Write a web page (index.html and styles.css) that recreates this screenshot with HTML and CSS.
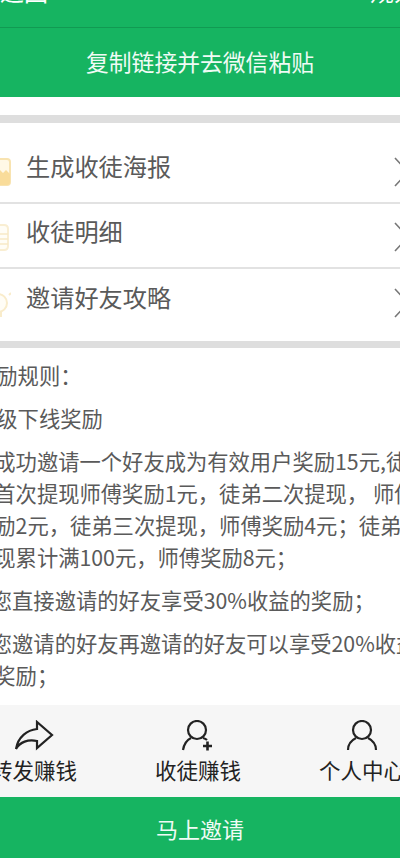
FILE: index.html
```html
<!DOCTYPE html>
<html lang="zh-CN">
<head>
  <meta charset="UTF-8" />
  <title>收徒赚钱</title>
  <link rel="stylesheet" href="styles.css">
</head>
<body>
  <div class="page">
    <div class="top-bar">
      <span>返回</span>
      <span class="top-right">规则</span>
    </div>
    <div class="copy-btn">复制链接并去微信粘贴</div>

    <div class="menu">
      <div class="menu-row row-1">
        <svg class="menu-icon" viewBox="0 0 26 28">
          <rect x="1" y="1" width="24" height="26" rx="3" fill="#fff8e6" stroke="#f8e3b0" stroke-width="2" />
          <path d="M2 26V19L12 9L18 15L21 12L25 16V24Q25 27 22 27H4Z" fill="#f9dc9a" />
        </svg>
        <span class="menu-text">生成收徒海报</span>
        <svg class="chevron" viewBox="0 0 16 30"><path d="M1 1L14 15L1 29" /></svg>
      </div>
      <div class="menu-row row-2">
        <svg class="menu-icon" viewBox="0 0 26 28">
          <path d="M9 2H19Q23 2 23 6V23Q23 27 19 27H6Q2 27 2 23V9Z" fill="#fffdf6" stroke="#f9eed2" stroke-width="2" />
          <path d="M11 11H23M11 16H23M11 21H23" stroke="#f8e9c6" stroke-width="1.5" />
        </svg>
        <span class="menu-text">收徒明细</span>
        <svg class="chevron" viewBox="0 0 16 30"><path d="M1 1L14 15L1 29" /></svg>
      </div>
      <div class="menu-row row-3">
        <svg class="menu-icon" viewBox="0 0 26 28">
          <circle cx="13" cy="14" r="9" fill="#fffdf6" stroke="#f9eccb" stroke-width="2" />
          <path d="M9 23V27H16V23M24 6L26 4" fill="none" stroke="#f9eccb" stroke-width="2" />
        </svg>
        <span class="menu-text">邀请好友攻略</span>
        <svg class="chevron" viewBox="0 0 16 30"><path d="M1 1L14 15L1 29" /></svg>
      </div>
    </div>

    <div class="rules">
      <p class="rule-head">奖励规则：</p>
      <p class="rule-head">一级下线奖励</p>
      <p>您成功邀请一个好友成为有效用户奖励15元,徒<br>弟首次提现师傅奖励1元，徒弟二次提现， 师傅奖<br>奖励2元，徒弟三次提现，师傅奖励4元；徒弟提<br>提现累计满100元，师傅奖励8元；</p>
      <p>1.您直接邀请的好友享受30%收益的奖励；</p>
      <p>2.您邀请的好友再邀请的好友可以享受20%收益<br>的奖励；</p>
    </div>

    <div class="tabs">
      <div class="tab">
        <svg class="tab-icon" viewBox="0 0 40 34">
          <path d="M2 29C4 17 13 10 23 9V2L38 15L23 28V21C14 19 6 22 2 29Z" />
        </svg>
        <span>转发赚钱</span>
      </div>
      <div class="tab">
        <svg class="tab-icon" viewBox="0 0 40 34">
          <circle cx="19" cy="10" r="9" />
          <path d="M5 30C6 24 9 20 13 18M25 18C27 18.500 28 19 29 20" />
          <path class="plus" d="M25 26H34M29.500 21.500V30.500" />
        </svg>
        <span>收徒赚钱</span>
      </div>
      <div class="tab">
        <svg class="tab-icon" viewBox="0 0 40 34">
          <circle cx="20" cy="10" r="9" />
          <path d="M6 30C6 24 10 20 14 18M26 18C30 20 34 24 34 30" />
        </svg>
        <span>个人中心</span>
      </div>
    </div>
    <div class="invite-btn">马上邀请</div>
  </div>
</body>
</html>
```

FILE: styles.css
```css
html, body {
  margin: 0;
  height: 100%;
  overflow: hidden;
  background-color: #fff;
}
.page {
  display: flex;
  flex-direction: column;
  width: 492px;
  height: 858px;
  margin-left: -46px;
  font-family: "Noto Sans CJK SC", "Noto Sans", sans-serif;
  overflow: hidden;
}
.top-bar {
  display: flex;
  justify-content: space-between;
  height: 27px;
  padding: 0 28px 0 46px;
  background-color: #16b461;
  border-bottom: 1px solid #119a52;
  color: #fff;
  font-size: 24px;
  line-height: 24px;
  overflow: hidden;
}
.top-bar span {
  margin-top: -21px;
}
.copy-btn {
  height: 69px;
  line-height: 67px;
  text-align: center;
  background-color: #16b461;
  color: #f0fbf5;
  font-size: 22.800px;
}
.menu {
  margin-top: 18px;
  border-top: 8px solid #dedede;
  border-bottom: 7px solid #dedede;
}
.menu-row {
  display: flex;
  align-items: flex-start;
  padding-left: 31px;
  padding-right: 36px;
  color: #5a5a5a;
}
.row-1 {
  padding-top: 27px;
  padding-bottom: 15px;
  border-bottom: 2px solid #e2e2e2;
}
.row-2 {
  padding-top: 11px;
  padding-bottom: 15px;
  border-bottom: 2px solid #e2e2e2;
}
.row-3 {
  padding-top: 12px;
  padding-bottom: 23px;
}
.menu-icon {
  width: 26px;
  height: 28px;
  margin-top: 8px;
  margin-right: 15px;
}
.menu-text {
  flex: 1;
  font-size: 24.200px;
  line-height: 32px;
}
.chevron {
  width: 16px;
  height: 30px;
  margin-top: 7px;
  fill: none;
  stroke: #777;
  stroke-width: 1.6;
}
.rules {
  flex: 1;
  padding: 11px 0 0 19px;
  color: #5a5a5a;
  font-size: 21.300px;
  line-height: 32px;
  white-space: nowrap;
}
.rules p {
  margin: 0 0 11px;
}
.rules .rule-head {
  padding-left: 2px;
}
.tabs {
  display: grid;
  grid-template-columns: repeat(3, 164px);
  height: 92px;
  margin-left: -2px;
  background-color: #f6f6f6;
  color: #222;
}
.tab {
  display: flex;
  flex-direction: column;
  align-items: center;
  padding-top: 15px;
  font-size: 21.500px;
  line-height: 28px;
}
.tab-icon {
  width: 40px;
  height: 34px;
  margin-bottom: 2px;
  fill: none;
  stroke: #222;
  stroke-width: 2.2;
}
.tab-icon .plus {
  stroke-width: 2.6;
}
.invite-btn {
  height: 61px;
  line-height: 62px;
  text-align: center;
  background-color: #16b461;
  color: #f0fbf5;
  font-size: 22px;
}
```
